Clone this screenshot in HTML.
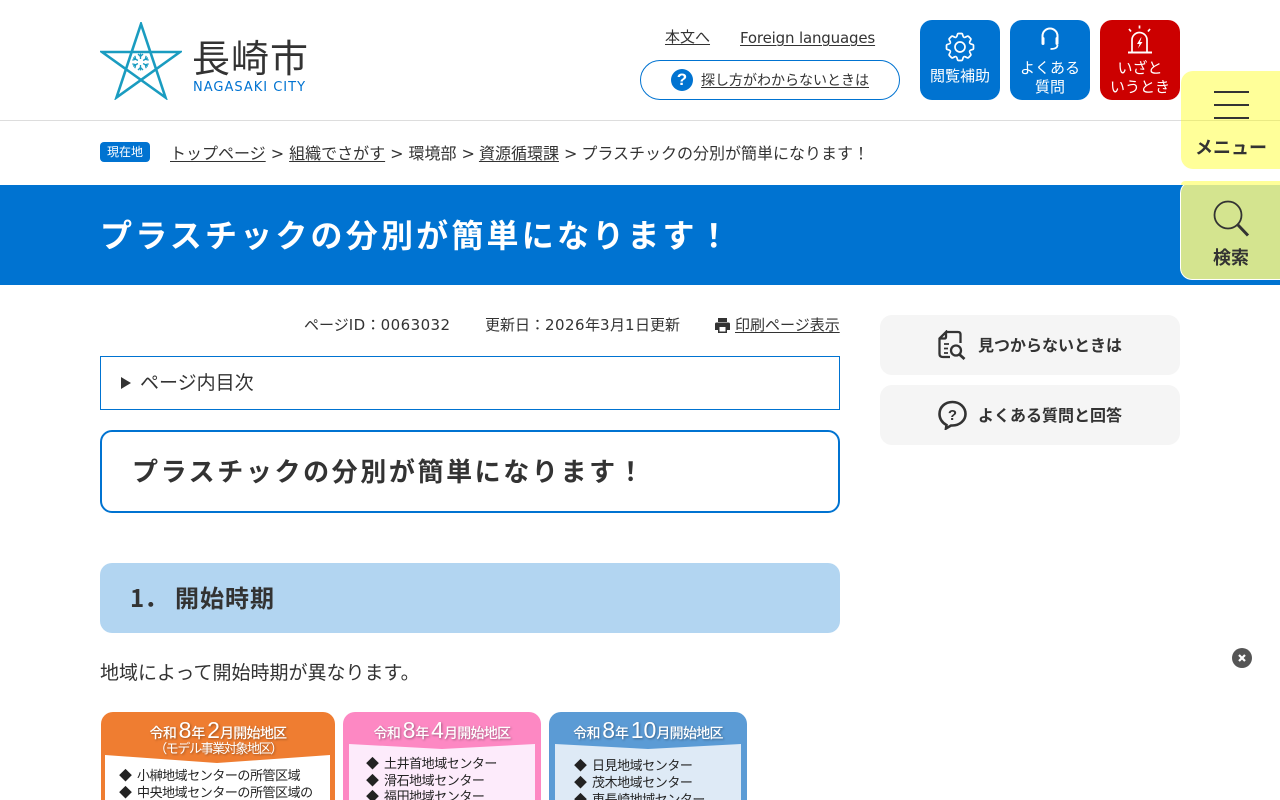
<!DOCTYPE html>
<html lang="ja"><head><meta charset="utf-8"><title>プラスチックの分別が簡単になります！</title>
<style>
html,body{margin:0;padding:0;width:1280px;height:800px;overflow:hidden;background:#fff}
body{position:relative;color:#333;font-family:"Noto Sans CJK JP",sans-serif}
.a{position:absolute;white-space:nowrap}
u{text-underline-offset:2px;text-decoration-thickness:1px}
.hb{position:absolute;top:20px;width:80px;height:80px;border-radius:12px;background:#0073d1;color:#fff;font-size:15px;line-height:18.5px;text-align:center}
.hb span{position:absolute;left:0;width:80px}
.box{position:absolute;box-sizing:border-box}
.img{position:absolute;top:712px;height:100px;border-radius:12px 12px 0 0;overflow:hidden;filter:blur(.25px)}
.img .t{position:absolute;left:0;right:0;text-align:center;color:#fff;font-size:14px;font-weight:500;letter-spacing:-.7px;line-height:24px;text-shadow:1px 1px 2px rgba(0,0,0,.35);white-space:nowrap}
.img .t b{font-weight:400;font-size:23px;font-family:"Liberation Sans",sans-serif;letter-spacing:0}
.l{position:absolute;font-size:13px;line-height:17px;color:#222;white-space:nowrap;letter-spacing:-.45px}
.l i{font-style:normal;margin-right:3px}
.s{font-family:"DejaVu Sans",sans-serif;margin:0 5px}
.d{font-family:"DejaVu Sans",sans-serif;letter-spacing:.45px}
</style></head><body>

<svg class="a" style="left:100px;top:22px" width="82" height="78" viewBox="0 0 82 78"><path d="M41 2 L65.500 75.500 L2 30 H80 L16.500 75.500 Z" fill="none" stroke="#1a9cc0" stroke-width="2.600" stroke-linejoin="miter"/><g transform="translate(40.500 40)" stroke="#1a9cc0" stroke-width="1.300" fill="none"><path d="M0-3V-8.500M0-5.500L-2.500-8M0-5.500L2.500-8"/><g transform="rotate(60)"><path d="M0-3V-8.500M0-5.500L-2.500-8M0-5.500L2.500-8"/></g><g transform="rotate(120)"><path d="M0-3V-8.500M0-5.500L-2.500-8M0-5.500L2.500-8"/></g><g transform="rotate(180)"><path d="M0-3V-8.500M0-5.500L-2.500-8M0-5.500L2.500-8"/></g><g transform="rotate(240)"><path d="M0-3V-8.500M0-5.500L-2.500-8M0-5.500L2.500-8"/></g><g transform="rotate(300)"><path d="M0-3V-8.500M0-5.500L-2.500-8M0-5.500L2.500-8"/></g></g></svg>
<div class="a" style="left:192px;top:32px;font-size:38px;line-height:48px;letter-spacing:1px;color:#333">長崎市</div>
<div class="a" style="left:193px;top:79px;line-height:17px;letter-spacing:1px;color:#0073d1;font-family:'DejaVu Sans',sans-serif;font-size:13px">NAGASAKI CITY</div>

<div class="a" style="left:665px;top:26px;font-size:15px;line-height:22px"><u>本文へ</u></div>
<div class="a" style="left:740px;top:25px;line-height:22px"><u style="font-family:'DejaVu Sans',sans-serif;font-size:15px;letter-spacing:-.17px">Foreign languages</u></div>
<div class="box" style="left:640px;top:60px;width:260px;height:40px;border:1px solid #0073d1;border-radius:20px"></div>
<div class="a" style="left:671px;top:69px;width:22px;height:22px;border-radius:50%;background:#0073d1;color:#fff;font:700 17px/22px 'Liberation Sans',sans-serif;text-align:center">?</div>
<div class="a" style="left:701px;top:70px;font-size:14px;line-height:21px"><u>探し方がわからないときは</u></div>

<div class="hb" style="left:920px"><svg class="a" style="left:25px;top:12px" width="30" height="30" viewBox="-15 -15 30 30" fill="none" stroke="#fff" stroke-width="1.700"><path d="M-4.020-9.700Q-3.200-10-2.600-12.400Q-2.300-13.500-1.500-13.500H1.500Q2.300-13.500 2.600-12.400Q3.200-10 4.020-9.700"/><g transform="rotate(45)"><path d="M-4.020-9.700Q-3.200-10-2.600-12.400Q-2.300-13.500-1.500-13.500H1.500Q2.300-13.500 2.600-12.400Q3.200-10 4.020-9.700"/></g><g transform="rotate(90)"><path d="M-4.020-9.700Q-3.200-10-2.600-12.400Q-2.300-13.500-1.500-13.500H1.500Q2.300-13.500 2.600-12.400Q3.200-10 4.020-9.700"/></g><g transform="rotate(135)"><path d="M-4.020-9.700Q-3.200-10-2.600-12.400Q-2.300-13.500-1.500-13.500H1.500Q2.300-13.500 2.600-12.400Q3.200-10 4.020-9.700"/></g><g transform="rotate(180)"><path d="M-4.020-9.700Q-3.200-10-2.600-12.400Q-2.300-13.500-1.500-13.500H1.500Q2.300-13.500 2.600-12.400Q3.200-10 4.020-9.700"/></g><g transform="rotate(225)"><path d="M-4.020-9.700Q-3.200-10-2.600-12.400Q-2.300-13.500-1.500-13.500H1.500Q2.300-13.500 2.600-12.400Q3.200-10 4.020-9.700"/></g><g transform="rotate(270)"><path d="M-4.020-9.700Q-3.200-10-2.600-12.400Q-2.300-13.500-1.500-13.500H1.500Q2.300-13.500 2.600-12.400Q3.200-10 4.020-9.700"/></g><g transform="rotate(315)"><path d="M-4.020-9.700Q-3.200-10-2.600-12.400Q-2.300-13.500-1.500-13.500H1.500Q2.300-13.500 2.600-12.400Q3.200-10 4.020-9.700"/></g><circle r="5"/></svg><span style="top:47px">閲覧補助</span></div>
<div class="hb" style="left:1010px"><svg class="a" style="left:28px;top:7px" width="24" height="26" viewBox="0 0 24 26" fill="none" stroke="#fff" stroke-width="2"><path d="M4.500 13V9a7.500 7.500 0 0 1 15 0v4"/><rect x="3.500" y="10" width="3" height="8" rx="1.500" fill="#fff" stroke="none"/><rect x="17.500" y="10" width="3" height="8" rx="1.500" fill="#fff" stroke="none"/><path d="M19.500 18c0 2.500-2.500 4-7 4" stroke-width="1.700"/></svg><span style="top:39px">よくある<br>質問</span></div>
<div class="hb" style="left:1100px;background:#cc0000"><svg class="a" style="left:27px;top:5px" width="26" height="30" viewBox="0 0 26 30" fill="none" stroke="#fff" stroke-width="1.700"><path d="M5 27V15a7.500 7.500 0 0 1 15 0V27"/><path d="M1 27.500H25" stroke-width="2"/><path d="M14 12.500l-4 6.500h2.500l-1.500 4.500 4.500-6.500H13l1.500-4.500z" fill="#fff" stroke="none"/><path d="M12.500.5v3M2 4l2 2.500M23 4l-2 2.500"/></svg><span style="top:39px">いざと<br>いうとき</span></div>

<div class="box" style="left:0;top:120px;width:1280px;height:1px;background:#ddd"></div>
<div class="a" style="left:100px;top:142px;width:50px;height:20px;border-radius:4px;background:#0073d1;color:#fff;font-size:12px;line-height:20px;text-align:center">現在地</div>
<div class="a" style="left:170px;top:141px;font-size:16px;line-height:23px"><u>トップページ</u><span class="s">&gt;</span><u>組織でさがす</u><span class="s">&gt;</span>環境部<span class="s" style="margin-right:4px">&gt;</span><u>資源循環課</u><span class="s" style="margin-right:4px">&gt;</span>プラスチックの分別が簡単になります！</div>

<div class="box" style="left:0;top:185px;width:1280px;height:100px;background:#0073d1"></div>
<div class="a" style="left:100px;top:210px;font-size:32px;font-weight:700;line-height:48px;letter-spacing:3.2px;color:#fff">プラスチックの分別が簡単になります！</div>

<div class="box" style="left:1181px;top:71px;width:99px;height:98px;background:rgba(255,255,0,.4);border-radius:12px 0 0 12px"></div>
<div class="box" style="left:1214px;top:91px;width:35px;height:2px;background:#333"></div>
<div class="box" style="left:1214px;top:104px;width:35px;height:2px;background:#333"></div>
<div class="box" style="left:1214px;top:117px;width:35px;height:2px;background:#333"></div>
<div class="a" style="left:1195px;top:134px;font-size:18px;font-weight:700;line-height:26px">メニュー</div>
<div class="box" style="left:1180px;top:181px;width:100px;height:99px;background:#d4e48f;border:1px solid #fff;border-right:0;border-radius:12px 0 0 12px"></div>
<div class="box" style="left:1181px;top:181px;width:99px;height:4px;background:#ffff99;border-radius:12px 0 0 0"></div>
<svg class="a" style="left:1212px;top:199px" width="38" height="38" viewBox="0 0 38 38" fill="none" stroke="#333"><circle cx="16" cy="16" r="13.500" stroke-width="1.800"/><path d="M26 26l10 10.500" stroke-width="3"/></svg>
<div class="a" style="left:1213px;top:244px;font-size:18px;font-weight:700;line-height:26px">検索</div>

<div class="a" style="left:304px;top:314px;font-size:15px;line-height:22px">ページ<span class="d">ID</span>：<span class="d">0063032</span></div>
<div class="a" style="left:485px;top:314px;font-size:15px;line-height:22px">更新日：<span class="d">2026</span>年<span class="d">3</span>月<span class="d">1</span>日更新</div>
<svg class="a" style="left:715px;top:318px" width="15" height="15" viewBox="0 0 15 15" fill="#333"><path d="M3 0h9v4H3zM1.500 4.500h12q1.500 0 1.500 1.500v6h-3v3H3v-3H0V6q0-1.500 1.500-1.500z"/><path d="M4.500 9h6v4.500h-6z" fill="#fff"/></svg>
<div class="a" style="left:735px;top:314px;font-size:15px;line-height:22px"><u>印刷ページ表示</u></div>

<div class="box" style="left:100px;top:356px;width:740px;height:54px;border:1px solid #0073d1"></div>
<div class="a" style="left:121px;top:377px;width:0;height:0;border-left:10px solid #333;border-top:6px solid transparent;border-bottom:6px solid transparent"></div>
<div class="a" style="left:140px;top:369px;font-size:19px;line-height:26px">ページ内目次</div>

<div class="box" style="left:100px;top:430px;width:740px;height:83px;border:2px solid #0073d1;border-radius:12px"></div>
<div class="a" style="left:132px;top:451px;font-size:26px;font-weight:700;line-height:40px;letter-spacing:2.6px">プラスチックの分別が簡単になります！</div>

<div class="box" style="left:100px;top:563px;width:740px;height:70px;background:#b2d5f1;border-radius:12px"></div>
<div class="a" style="left:130px;top:579px;font-size:24px;font-weight:700;line-height:36px">1．</div>
<div class="a" style="left:175px;top:579px;font-size:24px;font-weight:700;line-height:36px;letter-spacing:1px">開始時期</div>

<div class="a" style="left:100px;top:659px;font-size:19px;line-height:26px">地域によって開始時期が異なります。</div>

<div class="img" style="left:101px;width:234px;background:#ef7d31"><div class="t" style="top:6px">令和 <b>8</b>年 <b>2</b>月開始地区</div><div class="t" style="top:24px;font-size:13px;font-weight:400;letter-spacing:-1.4px">（モデル事業対象地区）</div>
<svg class="a" style="left:4px;top:43px" width="225" height="60"><path d="M0 0L112 8L225 0V60H0Z" fill="#fff"/></svg>
<div class="l" style="left:18px;top:54px"><i>◆</i> 小榊地域センターの所管区域</div><div class="l" style="left:18px;top:71px"><i>◆</i> 中央地域センターの所管区域の</div></div>
<div class="img" style="left:343px;width:198px;background:#fd88c3"><div class="t" style="top:6px">令和 <b>8</b>年 <b>4</b>月開始地区</div>
<svg class="a" style="left:6px;top:32px" width="186" height="70"><path d="M0 0L93 5L186 0V70H0Z" fill="#fdebfb"/></svg>
<div class="l" style="left:23px;top:42px"><i>◆</i> 土井首地域センター</div><div class="l" style="left:23px;top:59px"><i>◆</i> 滑石地域センター</div><div class="l" style="left:23px;top:75px"><i>◆</i> 福田地域センター</div></div>
<div class="img" style="left:549px;width:198px;background:#5b9bd5"><div class="t" style="top:6px">令和 <b>8</b>年 <b>10</b>月開始地区</div>
<svg class="a" style="left:6px;top:32px" width="186" height="70"><path d="M0 0L93 5L186 0V70H0Z" fill="#deeaf6"/></svg>
<div class="l" style="left:25px;top:44px"><i>◆</i> 日見地域センター</div><div class="l" style="left:25px;top:61px"><i>◆</i> 茂木地域センター</div><div class="l" style="left:25px;top:78px"><i>◆</i> 東長崎地域センター</div></div>

<div class="box" style="left:880px;top:315px;width:300px;height:60px;background:#f5f5f5;border-radius:12px"></div>
<svg class="a" style="left:938px;top:330px" width="28" height="30" viewBox="0 0 28 30" fill="none" stroke="#333" stroke-width="2.300"><path d="M8 2H20q2.500 0 2.500 2.500V13M12 27H5q-3.500 0-3.500-3V8.500L8 2v5q0 1.500-1.500 1.500H1.500"/><path d="M6 14h5M6 18.500h4M6 23h4" stroke-width="1.800"/><circle cx="18" cy="20.500" r="5"/><path d="M21.500 24.500l5 4.500" stroke-width="2.800"/></svg>
<div class="a" style="left:978px;top:332px;font-size:16px;font-weight:700;line-height:24px">見つからないときは</div>
<div class="box" style="left:880px;top:385px;width:300px;height:60px;background:#f5f5f5;border-radius:12px"></div>
<svg class="a" style="left:938px;top:400px" width="30" height="30" viewBox="0 0 30 30" fill="none" stroke="#333" stroke-width="2.600"><path d="M14.500 2C7 2 1.500 7 1.500 14c0 5 3 9 7 11l-.5 3.500 5-3h1.500c7 0 13-5 13-11.500S22 2 14.500 2z"/><text x="14.500" y="20" font-size="15" font-weight="700" text-anchor="middle" fill="#333" stroke="none" font-family="Liberation Sans">?</text></svg>
<div class="a" style="left:978px;top:402px;font-size:16px;font-weight:700;line-height:24px">よくある質問と回答</div>

<div class="a" style="left:1232px;top:648px;width:20px;height:20px;border-radius:50%;background:#555"><svg width="20" height="20" stroke="#fff" stroke-width="2.200"><path d="M7 7l6 6M13 7l-6 6"/></svg></div>
</body></html>
